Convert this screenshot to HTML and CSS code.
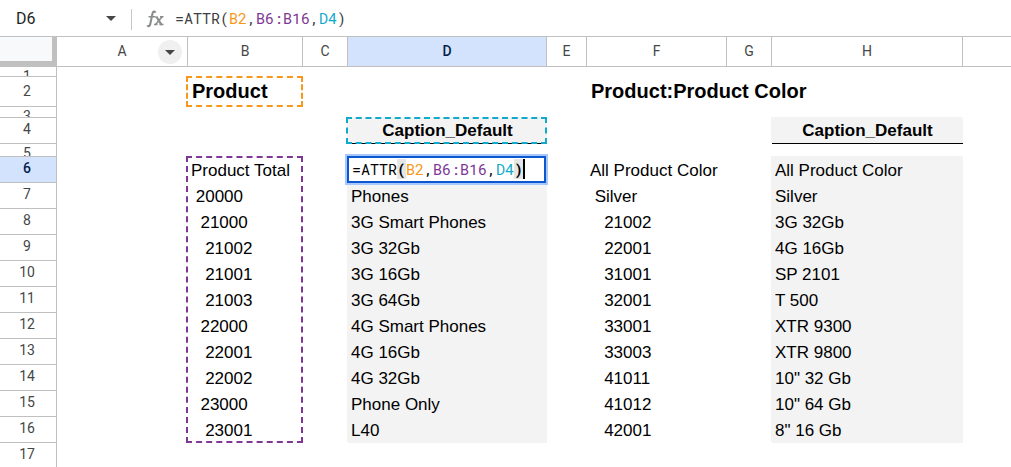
FILE: index.html
```html
<!DOCTYPE html>
<html lang="en">
<head>
<meta charset="utf-8">
<title>Spreadsheet</title>
<link rel="stylesheet" href="styles.css">
</head>
<body>
<header class="bar">
  <input class="name-box" type="text" value="D6" aria-label="Name box">
  <button class="name-menu" type="button" aria-label="Named ranges"><svg width="10" height="5" viewBox="0 0 10 5"><path d="M0 0h10L5 5z" fill="#444746"/></svg></button>
  <span class="divider"></span>
  <svg class="fx" width="18" height="18" viewBox="0 0 18 18" fill="none" stroke="#8b8e8d" aria-hidden="true">
    <path d="M9.500 2.600C9 1.200 7 1.200 6.500 3.400L4.200 14.200C3.800 16.200 2.300 16.700 1.200 15.400" stroke-width="2.100"/>
    <path d="M2.500 6.700h7.200M14 6.700h3.500M8 14.600h3.500M13.500 14.600h4" stroke-width="1.500"/>
    <path d="M10.300 6.500L15.500 14.800" stroke-width="2.300"/>
    <path d="M16.300 6.500L9.300 14.800" stroke-width="1.600"/>
  </svg>
  <div class="formula" role="textbox" aria-label="Formula" contenteditable="true" spellcheck="false">=ATTR(<span class="ref-orange">B2</span>,<span class="ref-purple">B6:B16</span>,<span class="ref-teal">D4</span>)</div>
</header>
<main class="sheet">
<table class="grid">
  <colgroup><col class="w-head"><col class="w-a"><col class="w-b"><col class="w-c"><col class="w-d"><col class="w-e"><col class="w-f"><col class="w-c"><col class="w-h"><col></colgroup>
  <thead>
    <tr>
      <th class="corner"><button type="button" aria-label="Select all"></button></th>
      <th scope="col">A<button class="col-menu" type="button" aria-label="Column A menu"><svg width="10" height="5" viewBox="0 0 10 5"><path d="M0 0h10L5 5z" fill="#444746"/></svg></button></th>
      <th scope="col">B</th><th scope="col">C</th><th scope="col" class="active">D</th><th scope="col">E</th><th scope="col">F</th><th scope="col">G</th><th scope="col">H</th><th></th>
    </tr>
  </thead>
  <tbody>
    <tr class="r1 thin"><th scope="row"><span>1</span></th><td></td><td></td><td></td><td></td><td></td><td></td><td></td><td></td><td></td></tr>
    <tr class="r2"><th scope="row"><span>2</span></th><td></td><td class="title">Product<i class="range orange"></i></td><td></td><td></td><td></td><td class="title">Product:Product Color</td><td></td><td></td><td></td></tr>
    <tr class="r3 thin"><th scope="row"><span>3</span></th><td></td><td></td><td></td><td></td><td></td><td></td><td></td><td></td><td></td></tr>
    <tr class="r4"><th scope="row"><span>4</span></th><td></td><td></td><td></td><td class="caption fill">Caption_Default<i class="range teal"></i></td><td></td><td></td><td></td><td class="caption fill">Caption_Default</td><td></td></tr>
    <tr class="r5 thin"><th scope="row"><span>5</span></th><td></td><td></td><td></td><td></td><td></td><td></td><td></td><td></td><td></td></tr>
    <tr><th scope="row" class="active"><span>6</span></th><td></td><td>Product Total<i class="range purple"></i></td><td></td><td class="fill"><div class="editor" role="textbox" aria-label="Cell D6" contenteditable="true" spellcheck="false">=ATTR<b class="paren">(</b><span class="ref-orange">B2</span>,<span class="ref-purple">B6:B16</span>,<span class="ref-teal">D4</span><b class="paren caret">)</b></div></td><td></td><td>All Product Color</td><td></td><td class="fill">All Product Color</td><td></td></tr>
    <tr><th scope="row"><span>7</span></th><td></td><td> 20000</td><td></td><td class="fill">Phones</td><td></td><td> Silver</td><td></td><td class="fill">Silver</td><td></td></tr>
    <tr><th scope="row"><span>8</span></th><td></td><td>  21000</td><td></td><td class="fill">3G Smart Phones</td><td></td><td>   21002</td><td></td><td class="fill">3G 32Gb</td><td></td></tr>
    <tr><th scope="row"><span>9</span></th><td></td><td>   21002</td><td></td><td class="fill">3G 32Gb</td><td></td><td>   22001</td><td></td><td class="fill">4G 16Gb</td><td></td></tr>
    <tr><th scope="row"><span>10</span></th><td></td><td>   21001</td><td></td><td class="fill">3G 16Gb</td><td></td><td>   31001</td><td></td><td class="fill">SP 2101</td><td></td></tr>
    <tr><th scope="row"><span>11</span></th><td></td><td>   21003</td><td></td><td class="fill">3G 64Gb</td><td></td><td>   32001</td><td></td><td class="fill">T 500</td><td></td></tr>
    <tr><th scope="row"><span>12</span></th><td></td><td>  22000</td><td></td><td class="fill">4G Smart Phones</td><td></td><td>   33001</td><td></td><td class="fill">XTR 9300</td><td></td></tr>
    <tr><th scope="row"><span>13</span></th><td></td><td>   22001</td><td></td><td class="fill">4G 16Gb</td><td></td><td>   33003</td><td></td><td class="fill">XTR 9800</td><td></td></tr>
    <tr><th scope="row"><span>14</span></th><td></td><td>   22002</td><td></td><td class="fill">4G 32Gb</td><td></td><td>   41011</td><td></td><td class="fill">10" 32 Gb</td><td></td></tr>
    <tr><th scope="row"><span>15</span></th><td></td><td>  23000</td><td></td><td class="fill">Phone Only</td><td></td><td>   41012</td><td></td><td class="fill">10" 64 Gb</td><td></td></tr>
    <tr><th scope="row"><span>16</span></th><td></td><td>   23001</td><td></td><td class="fill">L40</td><td></td><td>   42001</td><td></td><td class="fill">8" 16 Gb</td><td></td></tr>
    <tr><th scope="row"><span>17</span></th><td></td><td></td><td></td><td></td><td></td><td></td><td></td><td></td><td></td></tr>
  </tbody>
</table>
</main>
</body>
</html>
```
FILE: styles.css
```css
* { box-sizing: border-box; }

body {
  margin: 0;
  height: 100vh;
  display: flex;
  flex-direction: column;
  overflow: hidden;
  background: #fff;
  color: #000;
  font-family: "Liberation Sans", Arial, sans-serif;
  font-size: 17px;
}

button { padding: 0; border: 0; background: none; }
svg { display: block; }

/* Formula bar */
.bar {
  display: flex;
  align-items: center;
  flex: none;
  height: 37px;
  border-bottom: 1px solid #c0c0c0;
}
.name-box {
  width: 96px;
  padding: 2px 0 0 16px;
  border: 0;
  outline: 0;
  background: none;
  font: 16px/24px Roboto, sans-serif;
  color: #1f1f1f;
}
.name-menu {
  display: grid;
  place-items: center;
  width: 30px;
  height: 24px;
}
.divider {
  width: 1px;
  height: 21px;
  margin: 2px 14px 0 5px;
  background: #c7c7c7;
}
.fx { margin-top: 2px; }
.formula {
  flex: 1;
  margin-left: 11px;
  outline: 0;
  color: #3c4043;
}
.formula, .editor {
  font-family: "Roboto Mono", "Noto Sans Mono", "Liberation Mono", monospace;
  font-size: 15px;
  line-height: 22px;
  white-space: pre;
}
.ref-orange { color: #f7981d; }
.ref-purple { color: #7e3794; }
.ref-teal { color: #11a9cc; }

/* Grid */
.sheet { flex: 1; min-height: 0; overflow: hidden; }
.grid {
  width: 100%;
  table-layout: fixed;
  border-collapse: separate;
  border-spacing: 0;
}
.w-head { width: 57px; }
.w-a { width: 131px; }
.w-b { width: 115px; }
.w-c { width: 45px; }
.w-d { width: 199px; }
.w-e { width: 40px; }
.w-f { width: 140px; }
.w-h { width: 191px; }

th {
  position: relative;
  padding: 0;
  border: 0 solid #c0c0c0;
  font: 14px/29px Roboto, sans-serif;
  color: #444746;
}
thead th { height: 30px; border-width: 0 1px 1px 0; }
thead th:last-child { border-right-width: 0; }
th.active { background: #d3e3fd; color: #041e49; font-weight: 500; }
thead .corner {
  border-width: 0 5px 6px 0;
  background: #f8f9fa;
  line-height: 0;
}
.corner button { width: 100%; height: 24px; }
.col-menu {
  position: absolute;
  top: 3px;
  right: 5px;
  display: grid;
  place-items: center;
  width: 24px;
  height: 24px;
  border-radius: 50%;
  background: #f0f0f0;
}

tbody th {
  height: 26px;
  border-width: 0 1px 1px 0;
  vertical-align: top;
}
tbody th span {
  display: block;
  height: 25px;
  line-height: 23px;
  padding-right: 2px;
  overflow: hidden;
}
.thin th span { line-height: 19px; }
.r1 th { height: 10px; }
.r1 th span { height: 9px; }
.r2 th { height: 30px; }
.r2 th span { height: 29px; line-height: 29px; }
.r3 th { height: 11px; }
.r3 th span { height: 10px; }
.r5 th { height: 13px; }
.r5 th span { height: 12px; }

td {
  position: relative;
  padding: 0 3px;
  line-height: 25px;
  white-space: pre;
}
.thin td { line-height: 0; }
.title { padding: 0 3px 2px 4px; font-size: 20px; font-weight: bold; line-height: 28px; }
.caption { border-bottom: 1px solid #000; font-weight: bold; text-align: center; }
.fill { background: #f3f3f3; box-shadow: -1px -1px #f3f3f3; }

/* Referenced ranges and the cell editor */
.range {
  position: absolute;
  inset: -1px 0 0 -2px;
  border: 2px dashed;
  pointer-events: none;
}
.orange { border-color: #f7981d; }
.teal { bottom: -1px; border-color: #11a9cc; }
.purple { bottom: auto; height: calc(1100% + 1px); border-color: #7e3794; z-index: 1; }

.editor {
  position: absolute;
  inset: -1px 1px 0 -1px;
  z-index: 2;
  padding: 0 3px;
  border: 2px solid #0b57d0;
  outline: 2px solid #a8c7fa;
  background: #fff;
}
.paren { background: #e6e6e6; }
.caret { border-right: 2px solid #000; }
```
